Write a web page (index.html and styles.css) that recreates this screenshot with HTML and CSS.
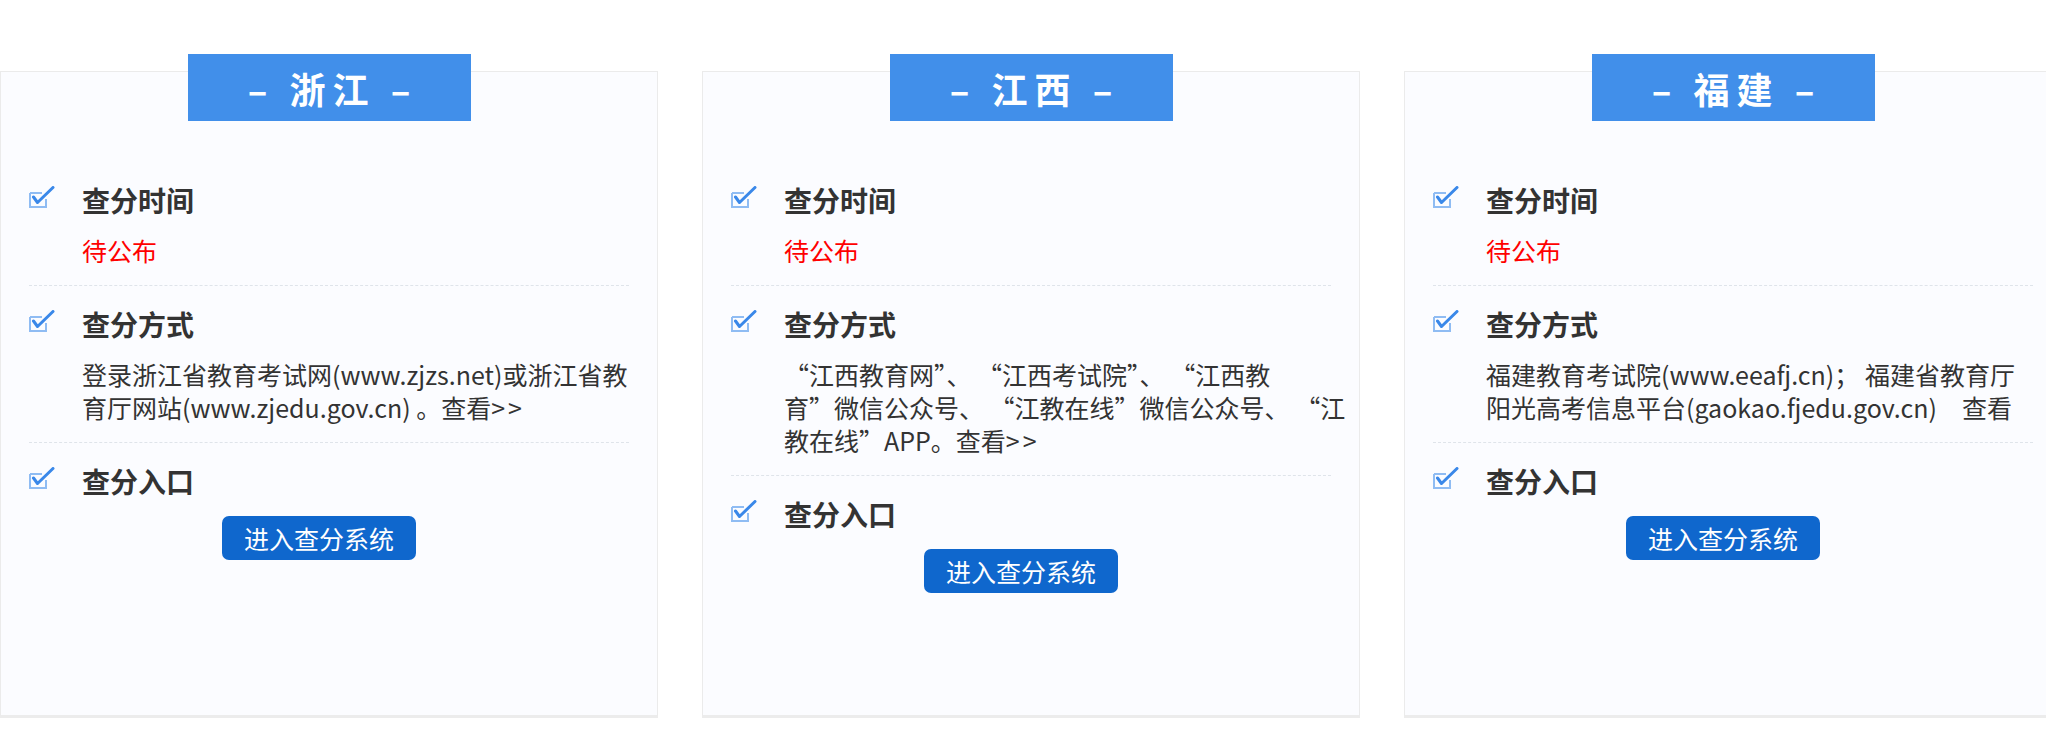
FILE: index.html
```html
<!DOCTYPE html>
<html lang="zh-CN">
<head>
<meta charset="utf-8">
<title>查分</title>
<link rel="stylesheet" href="styles.css">
</head>
<body>
<div class="row">
  <section class="card">
    <div class="tab">– 浙江 –</div>
    <div class="item">
      <h3 class="head"><svg class="chk" viewBox="0 0 26 22" width="26" height="22"><path d="M1 7 H13 M1 7 V21 H17 V13" fill="none" stroke="#8fbcf3" stroke-width="2"/><path d="M4.5 11 L8.5 16.5 L24 1.5" fill="none" stroke="#3a88e9" stroke-width="3" stroke-linecap="round" stroke-linejoin="round"/></svg>查分时间</h3>
      <p class="txt red">待公布</p>
    </div>
    <div class="item">
      <h3 class="head"><svg class="chk" viewBox="0 0 26 22" width="26" height="22"><path d="M1 7 H13 M1 7 V21 H17 V13" fill="none" stroke="#8fbcf3" stroke-width="2"/><path d="M4.5 11 L8.5 16.5 L24 1.5" fill="none" stroke="#3a88e9" stroke-width="3" stroke-linecap="round" stroke-linejoin="round"/></svg>查分方式</h3>
      <p class="txt">登录浙江省教育考试网(www.zjzs.net)或浙江省教<br>育厅网站(www.zjedu.gov.cn) 。查看<span class="more">&gt;&gt;</span></p>
    </div>
    <div class="item last">
      <h3 class="head"><svg class="chk" viewBox="0 0 26 22" width="26" height="22"><path d="M1 7 H13 M1 7 V21 H17 V13" fill="none" stroke="#8fbcf3" stroke-width="2"/><path d="M4.5 11 L8.5 16.5 L24 1.5" fill="none" stroke="#3a88e9" stroke-width="3" stroke-linecap="round" stroke-linejoin="round"/></svg>查分入口</h3>
      <a class="btn" href="#">进入查分系统</a>
    </div>
  </section>

  <section class="card">
    <div class="tab">– 江西 –</div>
    <div class="item">
      <h3 class="head"><svg class="chk" viewBox="0 0 26 22" width="26" height="22"><path d="M1 7 H13 M1 7 V21 H17 V13" fill="none" stroke="#8fbcf3" stroke-width="2"/><path d="M4.5 11 L8.5 16.5 L24 1.5" fill="none" stroke="#3a88e9" stroke-width="3" stroke-linecap="round" stroke-linejoin="round"/></svg>查分时间</h3>
      <p class="txt red">待公布</p>
    </div>
    <div class="item">
      <h3 class="head"><svg class="chk" viewBox="0 0 26 22" width="26" height="22"><path d="M1 7 H13 M1 7 V21 H17 V13" fill="none" stroke="#8fbcf3" stroke-width="2"/><path d="M4.5 11 L8.5 16.5 L24 1.5" fill="none" stroke="#3a88e9" stroke-width="3" stroke-linecap="round" stroke-linejoin="round"/></svg>查分方式</h3>
      <p class="txt">“江西教育网”、 “江西考试院”、 “江西教<br>育”微信公众号、 “江教在线”微信公众号、 “江<br>教在线”APP。查看<span class="more">&gt;&gt;</span></p>
    </div>
    <div class="item last">
      <h3 class="head"><svg class="chk" viewBox="0 0 26 22" width="26" height="22"><path d="M1 7 H13 M1 7 V21 H17 V13" fill="none" stroke="#8fbcf3" stroke-width="2"/><path d="M4.5 11 L8.5 16.5 L24 1.5" fill="none" stroke="#3a88e9" stroke-width="3" stroke-linecap="round" stroke-linejoin="round"/></svg>查分入口</h3>
      <a class="btn" href="#">进入查分系统</a>
    </div>
  </section>

  <section class="card">
    <div class="tab">– 福建 –</div>
    <div class="item">
      <h3 class="head"><svg class="chk" viewBox="0 0 26 22" width="26" height="22"><path d="M1 7 H13 M1 7 V21 H17 V13" fill="none" stroke="#8fbcf3" stroke-width="2"/><path d="M4.5 11 L8.5 16.5 L24 1.5" fill="none" stroke="#3a88e9" stroke-width="3" stroke-linecap="round" stroke-linejoin="round"/></svg>查分时间</h3>
      <p class="txt red">待公布</p>
    </div>
    <div class="item">
      <h3 class="head"><svg class="chk" viewBox="0 0 26 22" width="26" height="22"><path d="M1 7 H13 M1 7 V21 H17 V13" fill="none" stroke="#8fbcf3" stroke-width="2"/><path d="M4.5 11 L8.5 16.5 L24 1.5" fill="none" stroke="#3a88e9" stroke-width="3" stroke-linecap="round" stroke-linejoin="round"/></svg>查分方式</h3>
      <p class="txt">福建教育考试院(www.eeafj.cn)； 福建省教育厅<br>阳光高考信息平台(gaokao.fjedu.gov.cn)　查看</p>
    </div>
    <div class="item last">
      <h3 class="head"><svg class="chk" viewBox="0 0 26 22" width="26" height="22"><path d="M1 7 H13 M1 7 V21 H17 V13" fill="none" stroke="#8fbcf3" stroke-width="2"/><path d="M4.5 11 L8.5 16.5 L24 1.5" fill="none" stroke="#3a88e9" stroke-width="3" stroke-linecap="round" stroke-linejoin="round"/></svg>查分入口</h3>
      <a class="btn" href="#">进入查分系统</a>
    </div>
  </section>
</div>
</body>
</html>
```

FILE: styles.css
```css
html, body {
  margin: 0;
  padding: 0;
  background: #ffffff;
  overflow: hidden;
}
body {
  font-family: "Noto Sans CJK SC", "Noto Sans", sans-serif;
  color: #333333;
}
.row {
  display: flex;
  gap: 44px;
  padding-top: 71px;
  width: max-content;
}
.card {
  flex: 0 0 auto;
  box-sizing: border-box;
  width: 658px;
  height: 647px;
  padding: 0 28px;
  background: #fbfcff;
  border: 1px solid #ebebeb;
  border-bottom: 3px solid #ececec;
}
.tab {
  width: 283px;
  height: 67px;
  margin: -18px auto 41px;
  background: #418fea;
  color: #ffffff;
  font-size: 36px;
  font-weight: 700;
  letter-spacing: 7px;
  text-indent: 7px;
  display: flex;
  align-items: center;
  justify-content: center;
  white-space: pre;
}
.item {
  padding: 20px 0 18px;
  border-bottom: 1px dashed #dfe4ea;
}
.item.last {
  border-bottom: 0;
}
.head {
  margin: 0;
  display: flex;
  align-items: center;
  gap: 27px;
  height: 36px;
  font-size: 28px;
  font-weight: 700;
  color: #333333;
}
.chk {
  flex: 0 0 auto;
  margin-bottom: 6px;
}
.txt {
  margin: 16px 0 0 53px;
  font-size: 25px;
  line-height: 33px;
  color: #333333;
  white-space: nowrap;
}
.txt.red {
  color: #ff0000;
}
.more {
  letter-spacing: 3px;
}
.btn {
  display: flex;
  align-items: center;
  justify-content: center;
  width: 194px;
  height: 44px;
  margin: 17px 0 0 193px;
  border-radius: 7px;
  background: #0f67cd;
  color: #ffffff;
  font-size: 25px;
  text-decoration: none;
}
```
